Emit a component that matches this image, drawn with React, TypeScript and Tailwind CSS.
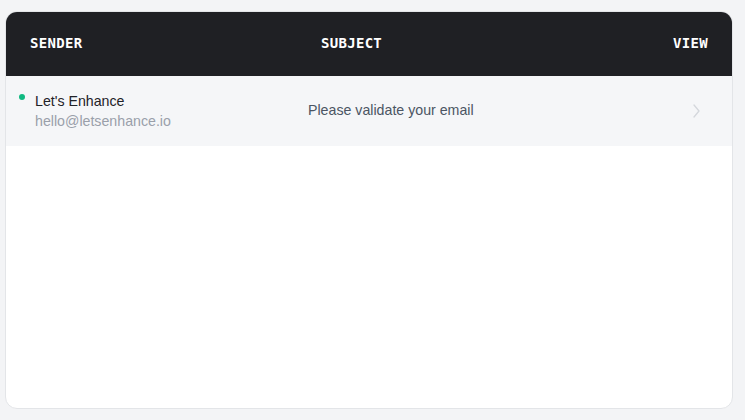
import React from 'react';

interface Message {
  name: string;
  email: string;
  subject: string;
  unread: boolean;
}

const messages: Message[] = [
  { name: "Let's Enhance", email: 'hello@letsenhance.io', subject: 'Please validate your email', unread: true },
];

const ChevronRight: React.FC = () => (
  <svg width="12" height="16" viewBox="0 0 12 16" fill="none" stroke="#d4d7dc" strokeWidth="1.3" strokeLinecap="round" strokeLinejoin="round">
    <path d="M4 2 L9 8 L4 14" />
  </svg>
);

const App: React.FC = () => {
  return (
    <div className="h-screen bg-[#f3f4f6] pt-[11px] pb-[11px] pl-[5px] pr-[12px] flex" style={{ fontFamily: '"Liberation Sans", Arial, sans-serif' }}>
      <div className="flex-1 bg-white border border-[#e3e5e8] rounded-xl overflow-hidden flex flex-col">
        <div
          className="h-[65px] -mt-px bg-[#1f2024] text-white font-bold text-[14px] tracking-[0.3px] grid grid-cols-[291px_1fr_auto] items-center pl-[24px] pr-[24px]"
          style={{ fontFamily: '"DejaVu Sans Mono", "Liberation Mono", monospace' }}
        >
          <span>SENDER</span>
          <span>SUBJECT</span>
          <span>VIEW</span>
        </div>
        {messages.map((m) => (
          <div key={m.email} className="h-[70px] bg-[#f5f6f8] grid grid-cols-[289px_1fr_auto] items-center pl-[13px] pr-[30px] text-[14.2px]">
            <div className="flex items-start gap-[10px]">
              <span className={`mt-[3px] w-[6px] h-[6px] rounded-full ${m.unread ? 'bg-[#10b981]' : 'bg-transparent'}`} />
              <div className="flex flex-col leading-[20px]">
                <span className="text-[#1f2228]">{m.name}</span>
                <span className="text-[#9aa0aa]">{m.email}</span>
              </div>
            </div>
            <span className="text-[#4b5563]">{m.subject}</span>
            <ChevronRight />
          </div>
        ))}
      </div>
    </div>
  );
};

export default App;
